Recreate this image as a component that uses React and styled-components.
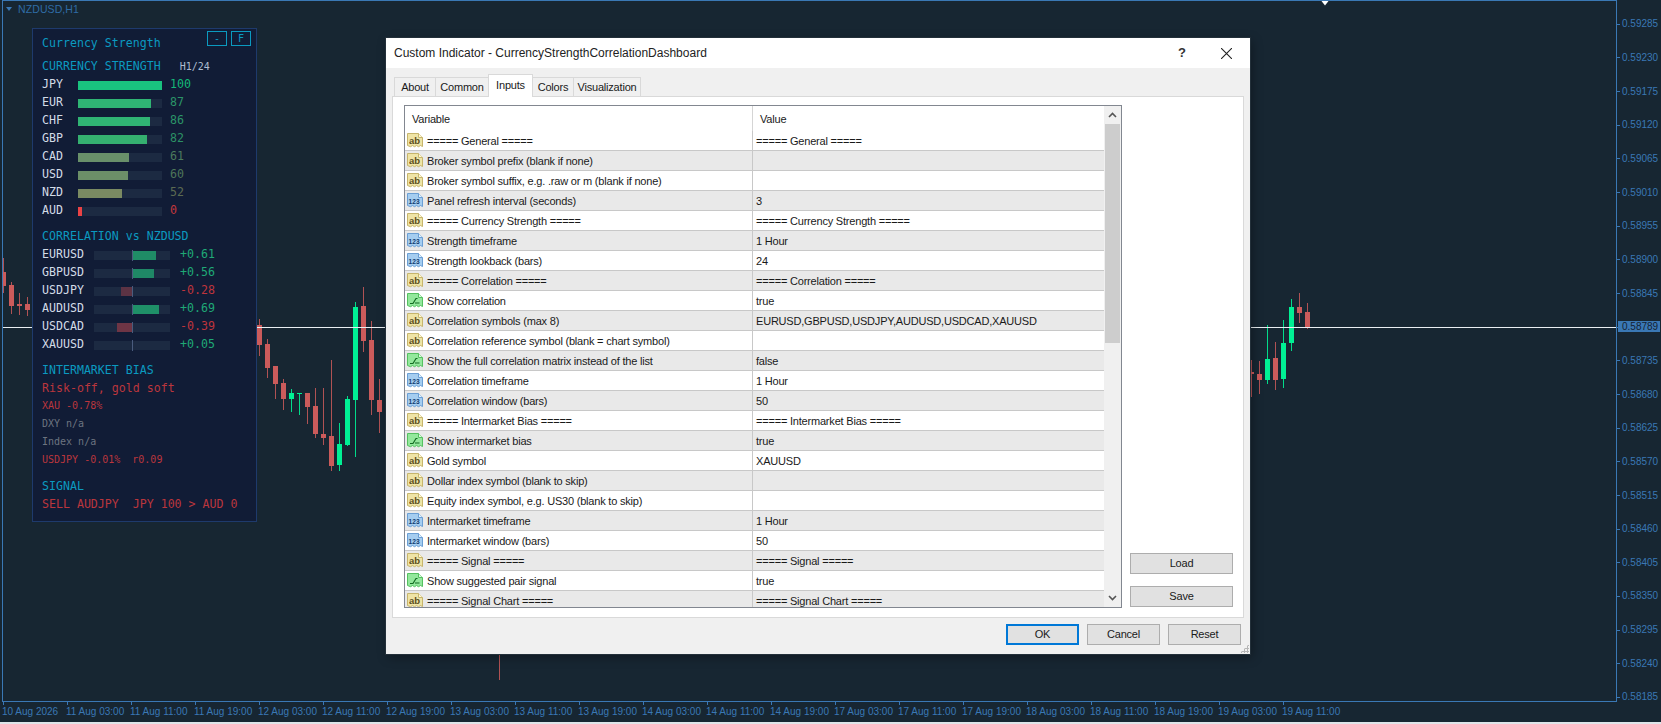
import styled, { createGlobalStyle } from "styled-components";

const MONO = `"DejaVu Sans Mono", "Liberation Mono", monospace`;
const UI = `"Liberation Sans", Arial, sans-serif`;

const GlobalStyle = createGlobalStyle`
  html, body {
    margin: 0;
    padding: 0;
    overflow: hidden;
    background: #172632;
  }
`;

const STRENGTH = [
  { code: "JPY", value: 100, bar: "#19c37f", text: "#14b878" },
  { code: "EUR", value: 87, bar: "#2fb574", text: "#2b9468" },
  { code: "CHF", value: 86, bar: "#30b474", text: "#2b9468" },
  { code: "GBP", value: 82, bar: "#35b070", text: "#2c9065" },
  { code: "CAD", value: 61, bar: "#69906a", text: "#4c7a5c" },
  { code: "USD", value: 60, bar: "#6c8f68", text: "#4e7659" },
  { code: "NZD", value: 52, bar: "#7a8a62", text: "#5c6b52" },
  { code: "AUD", value: 0, bar: "#ea4245", text: "#c4373c" },
];

const CORRELATION = [
  { symbol: "EURUSD", value: 0.61, bar: "#1f8c66" },
  { symbol: "GBPUSD", value: 0.56, bar: "#1f8866" },
  { symbol: "USDJPY", value: -0.28, bar: "#5c3344" },
  { symbol: "AUDUSD", value: 0.69, bar: "#1f9068" },
  { symbol: "USDCAD", value: -0.39, bar: "#6e3545" },
  { symbol: "XAUUSD", value: 0.05, bar: "#1c2a42" },
];

const INPUTS = [
  ["ab", "===== General =====", "===== General ====="],
  ["ab", "Broker symbol prefix (blank if none)", ""],
  ["ab", "Broker symbol suffix, e.g. .raw or m (blank if none)", ""],
  ["num", "Panel refresh interval (seconds)", "3"],
  ["ab", "===== Currency Strength =====", "===== Currency Strength ====="],
  ["num", "Strength timeframe", "1 Hour"],
  ["num", "Strength lookback (bars)", "24"],
  ["ab", "===== Correlation =====", "===== Correlation ====="],
  ["bool", "Show correlation", "true"],
  ["ab", "Correlation symbols (max 8)", "EURUSD,GBPUSD,USDJPY,AUDUSD,USDCAD,XAUUSD"],
  ["ab", "Correlation reference symbol (blank = chart symbol)", ""],
  ["bool", "Show the full correlation matrix instead of the list", "false"],
  ["num", "Correlation timeframe", "1 Hour"],
  ["num", "Correlation window (bars)", "50"],
  ["ab", "===== Intermarket Bias =====", "===== Intermarket Bias ====="],
  ["bool", "Show intermarket bias", "true"],
  ["ab", "Gold symbol", "XAUUSD"],
  ["ab", "Dollar index symbol (blank to skip)", ""],
  ["ab", "Equity index symbol, e.g. US30 (blank to skip)", ""],
  ["num", "Intermarket timeframe", "1 Hour"],
  ["num", "Intermarket window (bars)", "50"],
  ["ab", "===== Signal =====", "===== Signal ====="],
  ["bool", "Show suggested pair signal", "true"],
  ["ab", "===== Signal Chart =====", "===== Signal Chart ====="],
];

const PRICES = [
  "0.59285", "0.59230", "0.59175", "0.59120", "0.59065", "0.59010", "0.58955",
  "0.58900", "0.58845", "0.58789", "0.58735", "0.58680", "0.58625", "0.58570",
  "0.58515", "0.58460", "0.58405", "0.58350", "0.58295", "0.58240", "0.58185",
];

const TIMES = [
  "10 Aug 2026", "11 Aug 03:00", "11 Aug 11:00", "11 Aug 19:00", "12 Aug 03:00",
  "12 Aug 11:00", "12 Aug 19:00", "13 Aug 03:00", "13 Aug 11:00", "13 Aug 19:00",
  "14 Aug 03:00", "14 Aug 11:00", "14 Aug 19:00", "17 Aug 03:00", "17 Aug 11:00",
  "17 Aug 19:00", "18 Aug 03:00", "18 Aug 11:00", "18 Aug 19:00", "19 Aug 03:00",
  "19 Aug 11:00",
];

// x, wick top, body top, body bottom, wick bottom, up
const CANDLES = [
  [3, 258, 272, 286, 293, 0],
  [11, 282, 285, 306, 314, 0],
  [19, 293, 304, 306, 315, 0],
  [27, 297, 304, 310, 316, 0],
  [259, 319, 325, 345, 356, 0],
  [267, 339, 344, 368, 378, 0],
  [275, 366, 366, 384, 399, 0],
  [283, 379, 383, 399, 410, 0],
  [291, 389, 393, 399, 412, 1],
  [299, 393, 393, 394, 415, 1],
  [307, 393, 393, 407, 424, 0],
  [315, 388, 406, 434, 438, 0],
  [323, 388, 434, 438, 445, 0],
  [331, 360, 436, 466, 471, 0],
  [339, 423, 444, 465, 471, 1],
  [347, 396, 399, 445, 446, 1],
  [355, 302, 307, 400, 457, 1],
  [363, 287, 306, 341, 352, 0],
  [371, 321, 340, 400, 415, 0],
  [379, 379, 400, 412, 433, 0],
  [387, 410, 410, 461, 462, 0],
  [499, 640, 640, 640, 680, 0],
  [1251, 360, 372, 374, 397, 0],
  [1259, 361, 374, 380, 394, 0],
  [1267, 325, 359, 380, 384, 1],
  [1275, 342, 358, 380, 390, 0],
  [1283, 320, 343, 379, 388, 1],
  [1291, 299, 307, 343, 351, 1],
  [1299, 293, 307, 313, 323, 0],
  [1307, 303, 312, 328, 329, 0],
];

const DOC = "M.5.5h11l4 4v9l-2-1-2 1.2-2-1.2-2 1.2-2-1.2-2 1.2-3-1.2z";

const AbIcon = () => (
  <IconSvg viewBox="0 0 16 15">
    <path d={DOC} fill="#efe4a6" stroke="#c6b56c" />
    <path d="M11.5.5v4h4" fill="#fff8d8" stroke="#c6b56c" />
    <IconText x="2" y="10.5" fill="#5a4e1c" fontSize="9.5">ab</IconText>
  </IconSvg>
);

const NumIcon = () => (
  <IconSvg viewBox="0 0 16 15">
    <path d={DOC} fill="#a5cdf0" stroke="#6a9ed4" />
    <path d="M11.5.5v4h4" fill="#e2f1fd" stroke="#6a9ed4" />
    <IconText x="1.6" y="10.5" fill="#123e70" fontSize="6.6">123</IconText>
  </IconSvg>
);

const BoolIcon = () => (
  <IconSvg viewBox="0 0 16 15">
    <path d={DOC} fill="#93e89c" stroke="#55c060" />
    <path d="M11.5.5v4h4" fill="#dcf9df" stroke="#55c060" />
    <path d="M3 10.5h3l3-5h1.5M8 10h4.5" fill="none" stroke="#126b22" strokeWidth="1.2" />
  </IconSvg>
);

const ICONS = { ab: AbIcon, num: NumIcon, bool: BoolIcon };

const Chart = () => (
  <CandleSvg viewBox="3 1 1613 700">
    {CANDLES.map(([x, wt, bt, bb, wb, up]) => (
      <g key={x} fill={up ? "#00f094" : "#cb5b5b"}>
        <rect x={x} y={wt} width="1" height={wb - wt} opacity={up ? 0.9 : 0.85} />
        {bb > bt && <rect x={x - 2} y={bt} width="5" height={bb - bt} />}
      </g>
    ))}
    <rect x="3" y="327" width="1613" height="1" fill="#e9eef2" />
    <path d="M1321.5 1h7l-3.5 4.5z" fill="#fff" />
  </CandleSvg>
);

const StrengthPanel = () => (
  <Panel>
    <PanelHead>
      <PanelTitle>Currency Strength</PanelTitle>
      <PanelButtons>
        <PanelButton>-</PanelButton>
        <PanelButton>F</PanelButton>
      </PanelButtons>
    </PanelHead>

    <Section>
      <Heading>
        CURRENCY STRENGTH<HeadingNote>H1/24</HeadingNote>
      </Heading>
      {STRENGTH.map((item) => (
        <Row key={item.code}>
          <Label $width={36}>{item.code}</Label>
          <StrengthTrack>
            <StrengthFill
              style={{ width: Math.max(4, (84 * item.value) / 100), background: item.bar }}
            />
          </StrengthTrack>
          <Value $gap={8} $color={item.text}>{item.value}</Value>
        </Row>
      ))}
    </Section>

    <Section>
      <Heading>CORRELATION vs NZDUSD</Heading>
      {CORRELATION.map((item) => (
        <Row key={item.symbol}>
          <Label $width={52}>{item.symbol}</Label>
          <CorrTrack>
            <CorrHalf $side="end">
              {item.value < 0 && (
                <CorrFill style={{ width: -item.value * 38, background: item.bar }} />
              )}
            </CorrHalf>
            <CorrCenter />
            <CorrHalf $side="start">
              {item.value > 0 && (
                <CorrFill style={{ width: item.value * 38, background: item.bar }} />
              )}
            </CorrHalf>
          </CorrTrack>
          <Value $gap={10} $color={item.value > 0 ? "#1fa976" : "#bf343c"}>
            {item.value > 0 ? "+" : ""}
            {item.value.toFixed(2)}
          </Value>
        </Row>
      ))}
    </Section>

    <Section>
      <Heading>INTERMARKET BIAS</Heading>
      <BiasLine>Risk-off, gold soft</BiasLine>
      <SmallLine $color="#bb363d">XAU -0.78%</SmallLine>
      <SmallLine $color="#6d7480">DXY n/a</SmallLine>
      <SmallLine $color="#6d7480">Index n/a</SmallLine>
      <SmallLine $color="#bb363d">USDJPY -0.01%  r0.09</SmallLine>
    </Section>

    <Section>
      <Heading>SIGNAL</Heading>
      <BiasLine>SELL AUDJPY  JPY 100 &gt; AUD 0</BiasLine>
    </Section>
  </Panel>
);

const InputsDialog = () => (
  <Dialog>
    <TitleBar>
      <DialogTitle>Custom Indicator - CurrencyStrengthCorrelationDashboard</DialogTitle>
      <HelpMark>?</HelpMark>
      <CloseMark viewBox="0 0 10 10">
        <path d="M0 0l10 10M10 0L0 10" stroke="#222" strokeWidth="1" fill="none" />
      </CloseMark>
    </TitleBar>

    <TabStrip>
      <Tab $w={42}>About</Tab>
      <Tab $w={54}>Common</Tab>
      <Tab $w={45} $active>Inputs</Tab>
      <Tab $w={42}>Colors</Tab>
      <Tab $w={68}>Visualization</Tab>
    </TabStrip>

    <TabPage>
      <ListBox>
        <ListMain>
          <ListHeader>
            <HeaderCell $w={348}>Variable</HeaderCell>
            <HeaderCell>Value</HeaderCell>
          </ListHeader>
          {INPUTS.map(([type, name, value], i) => {
            const Icon = ICONS[type];
            return (
              <ListRow key={i} $alt={i % 2 === 1}>
                <NameCell>
                  <Icon />
                  <span>{name}</span>
                </NameCell>
                <ValueCell>{value}</ValueCell>
              </ListRow>
            );
          })}
        </ListMain>
        <ScrollBar>
          <ScrollArrow viewBox="0 0 9 6">
            <path d="M1 5l3.5-3.5L8 5" fill="none" stroke="#555" strokeWidth="1.6" />
          </ScrollArrow>
          <ScrollThumb />
          <ScrollArrow viewBox="0 0 9 6">
            <path d="M1 1l3.5 3.5L8 1" fill="none" stroke="#555" strokeWidth="1.6" />
          </ScrollArrow>
        </ScrollBar>
      </ListBox>
      <SideButtons>
        <DlgButton $w={103}>Load</DlgButton>
        <DlgButton $w={103}>Save</DlgButton>
      </SideButtons>
    </TabPage>

    <Footer>
      <DlgButton $w={73} $primary>OK</DlgButton>
      <DlgButton $w={73}>Cancel</DlgButton>
      <DlgButton $w={73}>Reset</DlgButton>
    </Footer>
    <Grip />
  </Dialog>
);

export default function App() {
  return (
    <Page>
      <GlobalStyle />
      <Plot>
        <Chart />
        <ChartTitle>
          <TitleArrow />
          NZDUSD,H1
        </ChartTitle>
        <StrengthPanel />
      </Plot>
      <PriceAxis>
        {PRICES.map((p, i) => (
          <PriceTick key={p}>
            <PriceLabel $current={i === 9}>{p}</PriceLabel>
          </PriceTick>
        ))}
      </PriceAxis>
      <TimeAxis>
        {TIMES.map((t) => (
          <TimeTick key={t}>{t}</TimeTick>
        ))}
      </TimeAxis>
      <InputsDialog />
    </Page>
  );
}

const Page = styled.div`
  position: relative;
  width: 1661px;
  height: 724px;
  box-sizing: border-box;
  padding-left: 2px;
  border-bottom: 2px solid #dfe5e9;
  display: grid;
  grid-template-columns: 1615px 1fr;
  grid-template-rows: 702px 20px;
  background: #172632;
  overflow: hidden;
`;

const Plot = styled.div`
  position: relative;
  box-sizing: border-box;
  border: 1px solid #3a78b5;
`;

const CandleSvg = styled.svg`
  display: block;
  width: 1613px;
  height: 700px;
`;

const ChartTitle = styled.div`
  position: absolute;
  left: 3px;
  top: 2px;
  display: flex;
  align-items: center;
  gap: 5px;
  font: 10.5px/12px ${UI};
  letter-spacing: 0.1px;
  color: #2f6ca6;
`;

const TitleArrow = styled.span`
  width: 0;
  height: 0;
  margin-right: 1px;
  border-left: 3.5px solid transparent;
  border-right: 3.5px solid transparent;
  border-top: 4px solid #3a78b5;
`;

const PriceAxis = styled.div`
  display: flex;
  flex-direction: column;
  padding-top: 7px;
  font: 10px/11px ${UI};
  color: #3a78b5;
`;

const PriceTick = styled.div`
  position: relative;
  flex: 0 0 33.66px;
  display: flex;
  align-items: center;
  &::before {
    content: "";
    position: absolute;
    left: 0;
    top: 50%;
    width: 3px;
    height: 1px;
    background: #3a78b5;
  }
`;

const PriceLabel = styled.span`
  position: relative;
  box-sizing: border-box;
  width: 42px;
  height: 11px;
  padding-left: 4px;
  margin-left: 1px;
  background: ${({ $current }) => ($current ? "#3a78b5" : "transparent")};
  color: ${({ $current }) => ($current ? "#152232" : "#3a78b5")};
`;

const TimeAxis = styled.div`
  grid-column: 1 / 3;
  display: flex;
  padding-left: 1px;
`;

const TimeTick = styled.div`
  position: relative;
  flex: 0 0 64px;
  box-sizing: border-box;
  padding-top: 3px;
  font: 10px/14px ${UI};
  color: #3a78b5;
  white-space: nowrap;
  text-indent: -1px;
  &::before {
    content: "";
    position: absolute;
    left: 0;
    top: 0;
    width: 1px;
    height: 3px;
    background: #3a78b5;
  }
`;

/* indicator panel */

const Panel = styled.div`
  position: absolute;
  left: 29px;
  top: 27px;
  width: 225px;
  height: 494px;
  box-sizing: border-box;
  padding-left: 9px;
  background: #111c36;
  border: 1px solid #1e3a6c;
  font-family: ${MONO};
`;

const PanelHead = styled.div`
  display: flex;
  justify-content: space-between;
  align-items: flex-start;
  height: 23px;
  padding: 2px 5px 0 0;
  margin-bottom: 4px;
`;

const PanelTitle = styled.div`
  margin-top: 3px;
  font-size: 11.6px;
  line-height: 18px;
  color: #0b9ac0;
`;

const PanelButtons = styled.div`
  display: flex;
  gap: 4px;
`;

const PanelButton = styled.div`
  box-sizing: border-box;
  width: 20px;
  height: 15px;
  border: 1px solid #0b9ac0;
  font-size: 10px;
  line-height: 13px;
  text-align: center;
  color: #0b9ac0;
`;

const Section = styled.div`
  margin-bottom: 8px;
`;

// text sits a pixel above the middle of its 18px row, the bars do not
const Heading = styled.div`
  display: flex;
  align-items: center;
  height: 16px;
  padding-bottom: 2px;
  font-size: 11.6px;
  color: #0b9ac0;
  white-space: pre;
`;

const HeadingNote = styled.span`
  margin-left: 19px;
  font-size: 10px;
  color: #aebccf;
`;

const Row = styled.div`
  display: flex;
  align-items: center;
  height: 18px;
  font-size: 11.6px;
`;

const Label = styled.span`
  flex: 0 0 ${({ $width }) => $width}px;
  align-self: flex-start;
  line-height: 16px;
  color: #d3dbe6;
`;

const Value = styled.span`
  align-self: flex-start;
  line-height: 16px;
  margin-left: ${({ $gap }) => $gap}px;
  color: ${({ $color }) => $color};
`;

const StrengthTrack = styled.div`
  flex: 0 0 84px;
  height: 9px;
  background: #1c2a42;
`;

const StrengthFill = styled.div`
  height: 100%;
`;

const CorrTrack = styled.div`
  flex: 0 0 76px;
  height: 9px;
  display: flex;
  background: #1c2a42;
`;

const CorrHalf = styled.div`
  flex: 1;
  display: flex;
  justify-content: ${({ $side }) => ($side === "end" ? "flex-end" : "flex-start")};
`;

const CorrFill = styled.div`
  height: 100%;
`;

const CorrCenter = styled.div`
  flex: 0 0 1px;
  height: 11px;
  margin-top: -1px;
  background: #4a5c7e;
`;

const BiasLine = styled.div`
  height: 18px;
  line-height: 16px;
  font-size: 11.6px;
  color: #bb363d;
  white-space: pre;
`;

const SmallLine = styled.div`
  height: 18px;
  line-height: 16px;
  font-size: 10px;
  color: ${({ $color }) => $color};
  white-space: pre;
`;

/* dialog */

const Dialog = styled.div`
  position: absolute;
  left: 386px;
  top: 38px;
  width: 864px;
  height: 616px;
  box-sizing: border-box;
  background: #f0f0f0;
  box-shadow: 0 0 0 1px #23303a, 2px 3px 10px rgba(0, 0, 0, 0.35);
  font: 11px/14px ${UI};
  letter-spacing: -0.2px;
  color: #1a1a1a;
`;

const TitleBar = styled.div`
  display: flex;
  align-items: center;
  height: 30px;
  padding: 0 18px 0 8px;
  background: #fff;
  letter-spacing: 0;
`;

const DialogTitle = styled.div`
  flex: 1;
  font-size: 12px;
  color: #222;
`;

const HelpMark = styled.span`
  margin-right: 35px;
  font-size: 13px;
  font-weight: 700;
  color: #333;
`;

const CloseMark = styled.svg`
  width: 11px;
  height: 11px;
`;

const TabStrip = styled.div`
  display: flex;
  align-items: flex-end;
  height: 29px;
  padding-left: 8px;
  position: relative;
  z-index: 1;
  margin-bottom: -1px;
`;

const Tab = styled.div`
  box-sizing: border-box;
  width: ${({ $w }) => $w}px;
  height: ${({ $active }) => ($active ? 23 : 20)}px;
  padding-top: ${({ $active }) => ($active ? 3 : 2)}px;
  margin-left: -1px;
  text-align: center;
  background: ${({ $active }) => ($active ? "#fff" : "#f0f0f0")};
  border: 1px solid #d9d9d9;
  border-bottom: ${({ $active }) => ($active ? "none" : "1px solid #d9d9d9")};
  &:first-child {
    margin-left: 0;
  }
`;

const TabPage = styled.div`
  display: flex;
  gap: 8px;
  box-sizing: border-box;
  height: 522px;
  margin: 0 6px;
  padding: 8px 0 0 11px;
  background: #fff;
  border: 1px solid #d9d9d9;
`;

const ListBox = styled.div`
  display: flex;
  box-sizing: border-box;
  width: 718px;
  height: 503px;
  border: 1px solid #828790;
  overflow: hidden;
`;

const ListMain = styled.div`
  flex: 1;
  min-width: 0;
`;

const ListHeader = styled.div`
  display: flex;
  align-items: center;
  height: 25px;
  background: #fff;
`;

const HeaderCell = styled.div`
  box-sizing: border-box;
  ${({ $w }) => ($w ? `width: ${$w}px; border-right: 1px solid #d5d5d5;` : "flex: 1;")}
  height: 100%;
  padding: 6px 0 0 7px;
`;

const ListRow = styled.div`
  display: flex;
  box-sizing: border-box;
  height: 20px;
  align-items: center;
  background: ${({ $alt }) => ($alt ? "#e9e9e9" : "#fff")};
  border-bottom: 1px solid #c8c8c8;
`;

const NameCell = styled.div`
  display: flex;
  align-items: center;
  gap: 4px;
  box-sizing: border-box;
  width: 348px;
  height: 100%;
  padding-left: 2px;
  border-right: 1px solid #c8c8c8;
  white-space: nowrap;
`;

const ValueCell = styled.div`
  flex: 1;
  padding-left: 3px;
  white-space: nowrap;
`;

const IconSvg = styled.svg`
  flex: none;
  width: 16px;
  height: 15px;
`;

const IconText = styled.text`
  font-family: ${UI};
  font-weight: 700;
  letter-spacing: 0;
`;

const ScrollBar = styled.div`
  flex: 0 0 17px;
  display: flex;
  flex-direction: column;
  align-items: center;
  background: #f0f0f0;
`;

const ScrollArrow = styled.svg`
  flex: none;
  width: 9px;
  height: 6px;
  margin: 6px 0;
`;

const ScrollThumb = styled.div`
  flex: none;
  width: 15px;
  height: 219px;
  margin-bottom: auto;
  background: #cdcdcd;
`;

const SideButtons = styled.div`
  display: flex;
  flex-direction: column;
  justify-content: flex-end;
  gap: 12px;
  height: 502px;
`;

const DlgButton = styled.div`
  box-sizing: border-box;
  width: ${({ $w }) => $w}px;
  height: 21px;
  line-height: ${({ $primary }) => ($primary ? 17 : 19)}px;
  text-align: center;
  background: #e1e1e1;
  border: ${({ $primary }) => ($primary ? "2px solid #0078d7" : "1px solid #adadad")};
  color: #1a1a1a;
`;

const Footer = styled.div`
  display: flex;
  justify-content: flex-end;
  gap: 8px;
  padding: 6px 9px 0 0;
`;

const Grip = styled.div`
  position: absolute;
  right: 1px;
  bottom: 1px;
  width: 9px;
  height: 9px;
  background-image: radial-gradient(#b5b5b5 1px, transparent 1.2px);
  background-size: 3px 3px;
  clip-path: polygon(100% 0, 100% 100%, 0 100%);
`;
